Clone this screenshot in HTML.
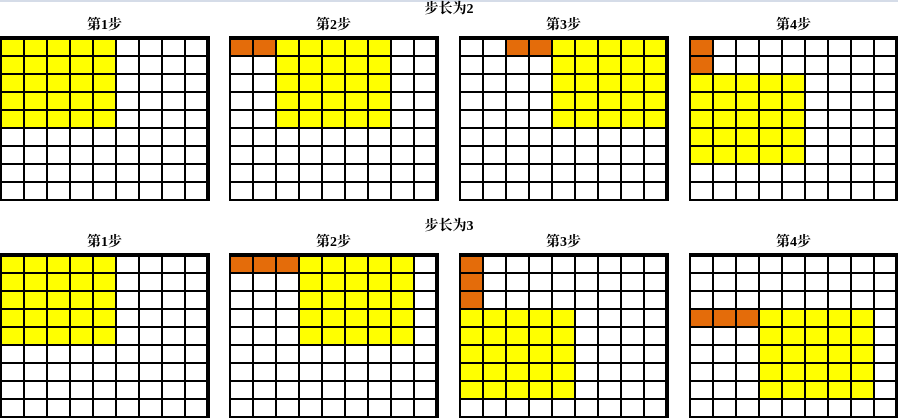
<!DOCTYPE html>
<html><head><meta charset="utf-8"><style>
body{margin:0;width:898px;height:419px;background:#fff;position:relative;overflow:hidden;border-top:2px solid #d5dce8;box-sizing:border-box;font-family:"Liberation Serif","Noto Serif CJK SC",serif}
.t{position:absolute;font-weight:bold;font-size:14px;line-height:16px;color:#000;text-align:center}
.c{position:absolute;box-sizing:border-box;border:2px solid #000;width:25px;height:20px}
.l{position:absolute;background:#000}
</style></head><body>
<div class="t" style="left:0;width:898px;top:0px">步长为2</div>
<div class="t" style="left:0;width:898px;top:217px">步长为3</div>
<script>
const Y='#ffff00',O='#e46c0a';
function fill(spec){const g=[];for(let r=0;r<9;r++){g.push([]);for(let c=0;c<9;c++)g[r].push('#fff');}
spec.forEach(([col,r0,r1,c0,c1])=>{for(let r=r0;r<=r1;r++)for(let c=c0;c<=c1;c++)g[r][c]=col;});return g;}
const panels=[
[1,35,[[Y,0,4,0,4]]],[230,35,[[O,0,0,0,1],[Y,0,4,2,6]]],[460,35,[[O,0,0,2,3],[Y,0,4,4,8]]],[690,35,[[O,0,1,0,0],[Y,2,6,0,4]]],
[1,252,[[Y,0,4,0,4]]],[230,252,[[O,0,0,0,2],[Y,0,4,3,7]]],[460,252,[[O,0,2,0,0],[Y,3,7,0,4]]],[690,252,[[O,3,3,0,2],[Y,3,7,3,7]]]];
let h='';
panels.forEach(([x,y,s],i)=>{const g=fill(s);
h+=`<div class="t" style="width:207px;left:${x}px;top:${y-19}px">第${i%4+1}步</div>`;
for(let r=0;r<9;r++)for(let c=0;c<9;c++)h+=`<div class="c" style="left:${x+c*23-1}px;top:${y+r*18}px;background:${g[r][c]}"></div>`;
h+=`<div class="l" style="left:${x-1}px;top:${y-1}px;width:210px;height:4px"></div>`;
h+=`<div class="l" style="left:${x+205}px;top:${y-1}px;width:4px;height:165px"></div>`;
});
document.body.insertAdjacentHTML('beforeend',h);
</script>
</body></html>
